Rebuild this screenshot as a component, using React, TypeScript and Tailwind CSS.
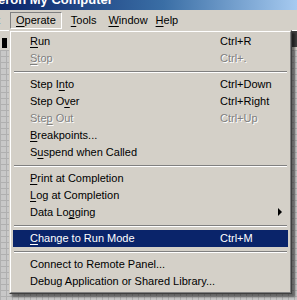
import type { ReactNode } from 'react'

type Item =
  | { kind: 'sep' }
  | {
      kind: 'item'
      label: ReactNode
      shortcut?: string
      disabled?: boolean
      active?: boolean
      submenu?: boolean
    }

const u = (s: string) => <span className="underline underline-offset-[2px]">{s}</span>

const items: Item[] = [
  { kind: 'item', label: <>{u('R')}un</>, shortcut: 'Ctrl+R' },
  { kind: 'item', label: <>{u('S')}top</>, shortcut: 'Ctrl+.', disabled: true },
  { kind: 'sep' },
  { kind: 'item', label: <>Step I{u('n')}to</>, shortcut: 'Ctrl+Down' },
  { kind: 'item', label: <>Step O{u('v')}er</>, shortcut: 'Ctrl+Right' },
  { kind: 'item', label: <>Ste{u('p')} Out</>, shortcut: 'Ctrl+Up', disabled: true },
  { kind: 'item', label: <>{u('B')}reakpoints...</> },
  { kind: 'item', label: <>S{u('u')}spend when Called</> },
  { kind: 'sep' },
  { kind: 'item', label: <>{u('P')}rint at Completion</> },
  { kind: 'item', label: <>{u('L')}og at Completion</> },
  { kind: 'item', label: <>Data Lo{u('g')}ging</>, submenu: true },
  { kind: 'sep' },
  { kind: 'item', label: <>{u('C')}hange to Run Mode</>, shortcut: 'Ctrl+M', active: true },
  { kind: 'sep' },
  { kind: 'item', label: <>Connect to Remote Panel...</> },
  { kind: 'item', label: <>Debug Application or Shared Library...</> },
]

function MenuRow({ item }: { item: Item }) {
  if (item.kind === 'sep') {
    return (
      <div className="h-[9px] flex flex-col justify-center px-[1px]">
        <div className="h-px bg-[#808080]" />
        <div className="h-px bg-white" />
      </div>
    )
  }
  const text = item.active
    ? 'text-white'
    : item.disabled
      ? 'text-[#808080] [text-shadow:1px_1px_0_#ffffff]'
      : 'text-black'
  return (
    <div
      className={`relative flex items-center h-[17px] ${item.active ? 'bg-[#0a246a]' : ''} ${text}`}
    >
      <span className="pl-[17px] w-[207px] whitespace-nowrap">{item.label}</span>
      {item.shortcut && <span className="whitespace-nowrap">{item.shortcut}</span>}
      {item.submenu && (
        <svg className="absolute right-[6px] top-[4px]" width="4" height="8" viewBox="0 0 4 8">
          <path d="M0 0 L4 4 L0 8 Z" fill="#000" />
        </svg>
      )}
    </div>
  )
}

export default function App() {
  return (
    <div className="relative w-[297px] h-[300px] overflow-hidden bg-[#d4d0c8] font-['Liberation_Sans',Arial,sans-serif] text-[11px] leading-none">
      {/* title bar */}
      <div className="h-[10px] overflow-hidden bg-[linear-gradient(90deg,#0a246a,#3a6ea5_55%,#a6caf0)]">
        <div className="-mt-[7px] -ml-[2px] text-white font-bold text-[13px] leading-[13px] whitespace-nowrap">
          eron My Computer
        </div>
      </div>

      {/* menu bar */}
      <div className="flex items-center h-[20px] text-black">
        <span className="-ml-[3px] w-[13px]">t</span>
        <div className="flex items-center h-[17px] px-[5px] border border-t-[#808080] border-l-[#808080] border-b-white border-r-white">
          {u('O')}perate
        </div>
        <span className="ml-[9px]">{u('T')}ools</span>
        <span className="ml-[12px]">{u('W')}indow</span>
        <span className="ml-[8px]">{u('H')}elp</span>
      </div>

      {/* toolbar */}
      <div className="h-[20px] border-t border-white flex items-start">
        <div className="mt-[7px] ml-[2px] w-[5px] h-[10px] bg-black" />
        <div className="ml-auto w-[5px] h-[16px] bg-[#404040]" />
      </div>

      {/* diagram canvas */}
      <div className="h-[250px] bg-[#c8c8c8] bg-[linear-gradient(#b0b0b0_1px,transparent_1px),linear-gradient(90deg,#b0b0b0_1px,transparent_1px)] bg-[size:6px_6px]" />

      {/* dropdown menu */}
      <div className="absolute left-[9px] top-[30px] w-[283px] shadow-[3px_3px_2px_rgba(0,0,0,0.5)] bg-[#d4d0c8] border border-t-[#d4d0c8] border-l-[#d4d0c8] border-b-[#404040] border-r-[#404040]">
        <div className="border border-t-white border-l-white border-b-[#808080] border-r-[#808080] p-[2px] pt-[1px]">
          {items.map((item, i) => (
            <MenuRow key={i} item={item} />
          ))}
        </div>
      </div>
    </div>
  )
}
